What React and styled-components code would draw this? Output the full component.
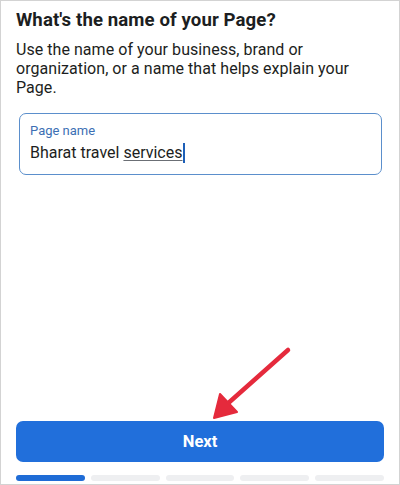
import styled, { createGlobalStyle } from 'styled-components'

const Global = createGlobalStyle`
  html, body {
    margin: 0;
    padding: 0;
    background: #fff;
  }
  * { box-sizing: border-box; }
`

const Screen = styled.div`
  position: relative;
  width: 400px;
  height: 485px;
  border: 1px solid #d3d3d3;
  padding: 8px 15px 3px;
  display: flex;
  flex-direction: column;
  font-family: Roboto, "Noto Sans", sans-serif;
  color: #1c1e21;
  overflow: hidden;
`

const Title = styled.h1`
  margin: 0;
  font-size: 18.6px;
  line-height: 23px;
  font-weight: 700;
  letter-spacing: 0.1px;
`

const Desc = styled.p`
  margin: 8px 0 0;
  font-size: 16px;
  line-height: 19px;
  letter-spacing: 0.05px;
  color: #1c1e21;
`

const Field = styled.div`
  margin: 16px 2px 0 3px;
  height: 62px;
  border: 1.5px solid #5b8fcc;
  border-radius: 7px;
  padding: 9px 10px 0;
`

const Label = styled.div`
  font-size: 13px;
  line-height: 16px;
  color: #3c6fb4;
`

const Value = styled.div`
  margin-top: 4px;
  font-size: 16px;
  line-height: 20px;
  display: flex;
  align-items: center;
  white-space: pre;
`

const Underlined = styled.span`
  text-decoration: underline;
  text-decoration-color: #6b6f75;
  text-underline-offset: 2px;
`

const Caret = styled.span`
  display: inline-block;
  width: 2px;
  height: 20px;
  background: #1d5fb8;
  margin-left: 1px;
`

const Spacer = styled.div`
  flex: 1;
`

const NextButton = styled.button`
  height: 41px;
  width: 100%;
  border: none;
  border-radius: 7px;
  background: #216fdb;
  color: #fff;
  font-family: Roboto, "Noto Sans", sans-serif;
  font-size: 16.5px;
  font-weight: 700;
`

const Progress = styled.div`
  margin-top: 13px;
  display: flex;
  gap: 6px;
`

const Step = styled.div`
  flex: 1;
  height: 6px;
  border-radius: 3px;
  background: ${p => (p.$active ? '#1f6cd6' : '#eeeff1')};
`

const Arrow = styled.svg`
  position: absolute;
  left: 200px;
  top: 335px;
`

export default function App() {
  return (
    <>
      <Global />
      <Screen>
        <Title>What's the name of your Page?</Title>
        <Desc>
          Use the name of your business, brand or organization, or a name that helps explain your Page.
        </Desc>
        <Field>
          <Label>Page name</Label>
          <Value>
            Bharat travel <Underlined>services</Underlined>
            <Caret />
          </Value>
        </Field>
        <Spacer />
        <NextButton>Next</NextButton>
        <Progress>
          {[0, 1, 2, 3, 4].map(i => (
            <Step key={i} $active={i === 0} />
          ))}
        </Progress>
        <Arrow width="100" height="90" viewBox="0 0 100 90">
          <line x1="87" y1="14" x2="24" y2="70" stroke="#e52a3c" strokeWidth="4.5" strokeLinecap="round" />
          <polygon points="13,82 19,58 36,76" fill="#e52a3c" stroke="#e52a3c" strokeWidth="2" strokeLinejoin="round" />
        </Arrow>
      </Screen>
    </>
  )
}
